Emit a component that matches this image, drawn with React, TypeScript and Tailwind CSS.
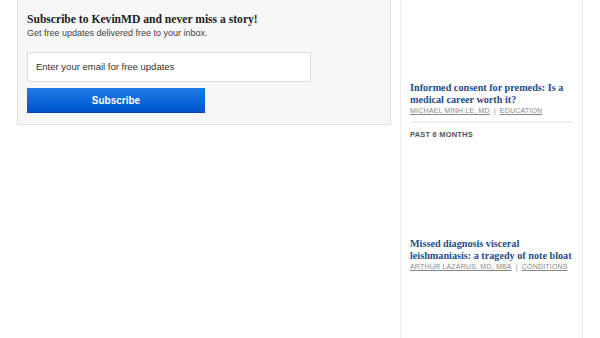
import React from "react";

const lserif = { fontFamily: '"Liberation Serif", "DejaVu Serif", serif' };

function Article({ title, author, cat }: { title: string; author: string; cat: string }) {
  return (
    <div>
      <div className="w-[168px] text-[10.2px] leading-[11.5px] font-bold text-[#1f4d8a]" style={lserif}>
        {title}
      </div>
      <div className="mt-[1px] whitespace-nowrap text-[7px] leading-[10px] text-[#888] tracking-[0.2px] uppercase" style={{ fontFamily: '"Liberation Sans", Arial, sans-serif' }}>
        <span className="underline">{author}</span>
        <span className="mx-[4px]">|</span>
        <span className="underline">{cat}</span>
      </div>
    </div>
  );
}

export default function App() {
  return (
    <div className="w-[600px] h-[338px] bg-white overflow-hidden flex" style={{ fontFamily: '"Liberation Sans", Arial, sans-serif' }}>
      <div className="w-[400px] pl-[17px] pr-[9px] shrink-0">
        <div className="bg-[#f7f7f7] border border-[#e3e3e3] border-t-0 h-[125px] pl-[9px] pt-[12px]">
          <div className="text-[11.6px] leading-[16px] font-bold text-[#222]" style={lserif}>
            Subscribe to KevinMD and never miss a story!
          </div>
          <div className="text-[9px] leading-[11px] text-[#444]">Get free updates delivered free to your inbox.</div>
          <div className="mt-[13px] w-[284px] h-[30px] bg-white border border-[#dcdcdc] flex items-center pl-[8px] text-[9.5px] text-[#333]">
            Enter your email for free updates
          </div>
          <div className="mt-[6px] w-[178px] h-[25px] flex items-center justify-center text-white font-bold text-[10px] bg-gradient-to-b from-[#1f7de6] to-[#0052cc] border-b border-[#0044aa]">
            Subscribe
          </div>
        </div>
      </div>
      <div className="w-[183px] h-full border-l border-r border-[#eeeeee] pl-[9px] pr-[6px] pt-[82px]">
        <Article title="Informed consent for premeds: Is a medical career worth it?" author="Michael Minh Le, MD" cat="Education" />
        <div className="mt-[5px] mr-[2px] border-t-2 border-[#f0f0f0]" />
        <div className="mt-[7px] text-[7.5px] leading-[10px] font-bold text-[#555] tracking-[0.2px]">PAST 6 MONTHS</div>
        <div className="mt-[98px]">
          <Article title="Missed diagnosis visceral leishmaniasis: a tragedy of note bloat" author="Arthur Lazarus, MD, MBA" cat="Conditions" />
        </div>
      </div>
    </div>
  );
}
